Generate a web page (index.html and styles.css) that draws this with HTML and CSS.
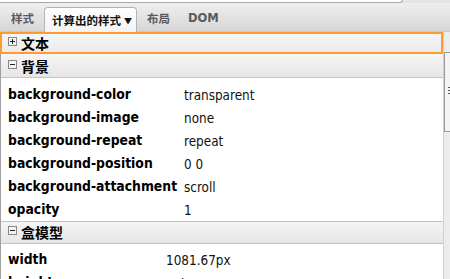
FILE: index.html
```html
<!DOCTYPE html>
<html>
<head>
<meta charset="utf-8">
<link rel="stylesheet" href="styles.css">
</head>
<body>
<div class="top-strip"><div class="top-white"></div></div>
<div class="tabbar">
  <div class="tab first">样式</div>
  <div class="tab active">计算出的样式<span class="caret">▼</span></div>
  <div class="tab third">布局</div>
  <div class="tab dom">DOM</div>
</div>
<div class="panel">
  <div class="content">
    <div class="group collapsed focused"><span class="toggle plus"></span><span class="gtitle">文本</span></div>
    <div class="group"><span class="toggle minus"></span><span class="gtitle">背景</span></div>
    <div class="props bg">
      <div class="row"><span class="name">background-color</span><span class="val">transparent</span></div>
      <div class="row"><span class="name">background-image</span><span class="val">none</span></div>
      <div class="row"><span class="name">background-repeat</span><span class="val">repeat</span></div>
      <div class="row"><span class="name">background-position</span><span class="val">0 0</span></div>
      <div class="row"><span class="name">background-attachment</span><span class="val">scroll</span></div>
      <div class="row"><span class="name">opacity</span><span class="val">1</span></div>
    </div>
    <div class="group topline"><span class="toggle minus"></span><span class="gtitle">盒模型</span></div>
    <div class="props box">
      <div class="row"><span class="name">width</span><span class="val">1081.67px</span></div>
      <div class="row"><span class="name">height</span><span class="val">auto</span></div>
    </div>
  </div>
  <div class="scrollbar"><div class="thumb"><span class="grip"></span></div></div>
</div>
</body>
</html>
```
FILE: styles.css
```css
html, body {
  margin: 0;
  padding: 0;
  background: #ffffff;
  overflow: hidden;
}
body {
  width: 450px;
  height: 279px;
  font-family: "DejaVu Sans Condensed", "DejaVu Sans", "Noto Sans CJK SC", sans-serif;
}
.top-strip {
  height: 3px;
  background: #e4e4e4;
  display: flex;
}
.top-white {
  width: 402px;
  height: 2px;
  background: #ffffff;
  border-bottom: 1px solid #a8a8a8;
  border-right: 1px solid #a8a8a8;
  border-bottom-right-radius: 3px;
}
.tabbar {
  height: 28px;
  border-bottom: 1px solid #c8c8c8;
  background: linear-gradient(#efefef, #d6d6d6);
  display: flex;
  align-items: flex-end;
}
.tab {
  height: 24px;
  line-height: 23px;
  padding: 0;
  font-family: "Noto Sans CJK SC", sans-serif;
  font-size: 11.5px;
  color: #5a5a5a;
  font-weight: bold;
  white-space: nowrap;
  box-sizing: border-box;
}
.tab.first { margin-left: 11px; }
.tab.active {
  margin-left: 10px;
  padding: 0 0 0 7px;
  width: 93px;
  height: 25px;
  margin-bottom: -1px;
  line-height: 24px;
  background: linear-gradient(#ffffff, #f3f3f3);
  border: 1px solid #b4b4b4;
  border-bottom: none;
  border-radius: 4px 4px 0 0;
  color: #111111;
}
.caret {
  font-size: 8px;
  margin-left: 3px;
  position: relative;
  top: -1px;
}
.tab.third { margin-left: 10px; }
.tab.dom {
  font-family: "DejaVu Sans", sans-serif;
  font-size: 11.5px;
  margin-left: 18px;
}
.panel {
  display: flex;
  height: 247px;
}
.content {
  width: 443px;
  border-left: 1px solid #a0a0a0;
  box-sizing: border-box;
}
.scrollbar {
  width: 7px;
  background: #ececec;
  border-left: 1px solid #d0d0d0;
  box-sizing: border-box;
  padding-top: 20px;
}
.thumb {
  height: 78px;
  border: 1px solid #9a9a9a;
  border-right: none;
  background: #f4f4f4;
  position: relative;
}
.grip {
  position: absolute;
  right: 0;
  top: 34px;
  width: 2px;
  height: 8px;
  background: repeating-linear-gradient(#555 0 1px, transparent 1px 3px);
}
.group {
  height: 23px;
  box-sizing: border-box;
  background: linear-gradient(#f5f5f5, #e6e6e6);
  border-bottom: 1px solid #c4c4c4;
  display: flex;
  align-items: center;
  padding-left: 7px;
}
.group.topline {
  border-top: 1px solid #c4c4c4;
  height: 23px;
}
.group.focused {
  border: 2px solid #ff9a33;
  height: 22px;
  margin-left: -1px;
  padding-left: 6px;
  background: linear-gradient(#f6f6f6, #ebebeb);
}
.group.focused + .group {
  height: 24px;
}
.toggle {
  width: 7px;
  height: 7px;
  border: 1px solid #888888;
  background: #f4f4f4;
  position: relative;
  margin-right: 4px;
  margin-top: -3px;
}
.toggle::before {
  content: "";
  position: absolute;
  left: 1px;
  top: 3px;
  width: 5px;
  height: 1px;
  background: #222;
}
.toggle.plus::after {
  content: "";
  position: absolute;
  left: 3px;
  top: 1px;
  width: 1px;
  height: 5px;
  background: #222;
}
.gtitle {
  font-family: "Noto Sans CJK SC", sans-serif;
  font-weight: bold;
  font-size: 14px;
  color: #000;
}
.props {
  padding-top: 4px;
}
.row {
  height: 23.1px;
  display: flex;
  align-items: center;
  padding-left: 7px;
}
.name {
  font-weight: bold;
  font-size: 13.8px;
  color: #000;
}
.val {
  font-size: 13.4px;
  color: #111;
  padding-top: 3px;
}
.bg .name { width: 176px; }
.box .name { width: 158px; }
```
